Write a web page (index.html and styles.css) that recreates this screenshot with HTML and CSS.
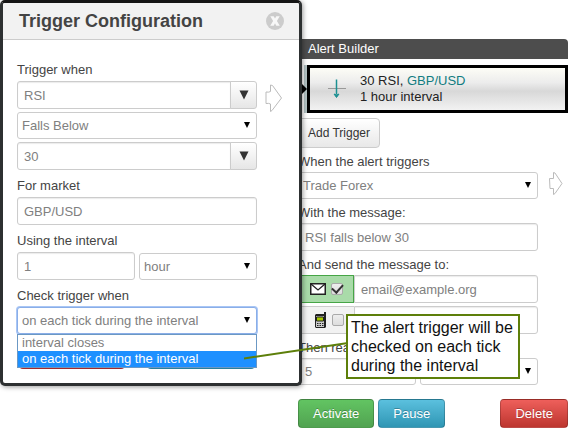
FILE: index.html
```html
<!DOCTYPE html>
<html lang="en">
<head>
<meta charset="utf-8">
<title>Alert Builder</title>
<link rel="stylesheet" href="styles.css">
</head>
<body>
<main class="page">
  <section class="dialog" role="dialog" aria-labelledby="dialog-title">
    <header class="dialog-head">
      <h1 id="dialog-title">Trigger Configuration</h1>
      <button class="close" type="button" aria-label="Close">
        <svg width="18" height="18" viewBox="0 0 18 18"><circle cx="9" cy="9" r="9" fill="#ccc"/><path d="M4.300 4.300h3.400L9 6.600l1.300-2.300h3.400L10.900 9l2.900 4.700h-3.500L9 11.300l-1.300 2.400H4.200L7.100 9z" fill="#f8f8f8"/></svg>
      </button>
    </header>
    <form class="dialog-body">
      <div class="fields">
        <label class="label" for="indicator">Trigger when</label>
        <div class="combo">
          <input class="field" id="indicator" value="RSI">
          <button class="combo-btn" type="button" aria-label="Choose indicator"><svg width="10" height="10" viewBox="0 0 10 10"><path d="M0.500 0.500h9L5 9.500z" fill="#333"/></svg></button>
        </div>
        <div class="select-wrap">
          <select class="field select" aria-label="Condition"><option>Falls Below</option></select>
          <svg class="caret" viewBox="0 0 6 6"><path d="M0 0h6L3 6z"/></svg>
        </div>
        <div class="combo">
          <input class="field" aria-label="Value" value="30">
          <button class="combo-btn" type="button" aria-label="Choose value"><svg width="10" height="10" viewBox="0 0 10 10"><path d="M0.500 0.500h9L5 9.500z" fill="#333"/></svg></button>
        </div>
        <label class="label" for="market">For market</label>
        <input class="field" id="market" value="GBP/USD">
        <label class="label" for="count">Using the interval</label>
        <div class="pair">
          <input class="field" id="count" value="1">
          <div class="select-wrap">
            <select class="field select" aria-label="Interval unit"><option>hour</option></select>
            <svg class="caret" viewBox="0 0 6 6"><path d="M0 0h6L3 6z"/></svg>
          </div>
        </div>
        <label class="label" for="check">Check trigger when</label>
        <div class="select-wrap open">
          <select class="field select" id="check"><option>on each tick during the interval</option></select>
          <svg class="caret" viewBox="0 0 6 6"><path d="M0 0h6L3 6z"/></svg>
          <ul class="menu" role="listbox" aria-label="Check trigger when">
            <li role="option">interval closes</li>
            <li class="active" role="option" aria-selected="true">on each tick during the interval</li>
          </ul>
        </div>
        <div class="actions"><span class="edge red"></span><span class="edge blue"></span></div>
      </div>
      <svg class="next" width="18" height="28" viewBox="0 0 18 28"><path d="M1 8q3 .5 4.500-.5V1l2 .5L16.500 14 7 26.500l-1.500 1V20q-1.500-1-4.500-.5z" fill="#fff" stroke="#bbb"/></svg>
    </form>
  </section>

  <section class="builder">
    <h2 class="builder-head">Alert Builder</h2>
    <div class="trigger">
      <svg class="pointer" width="5" height="10" viewBox="0 0 5 10"><path d="M0 0l5 5-5 5z"/></svg>
      <svg width="18" height="20" viewBox="0 0 18 20"><path d="M0 9.500h18" stroke="#999"/><path d="M8.500 0.500v15" stroke="#1c9092" stroke-width="1.500"/><path d="M6 15l2.500 3.500L11 15l-2.500 1z" fill="#1c9092" stroke="#1c9092"/></svg>
      <p>30 RSI, <a href="#market">GBP/USD</a><br>1 hour interval</p>
    </div>
    <button class="add" type="button">Add Trigger</button>
    <form class="builder-form">
      <div class="fields">
        <label class="label" for="action">When the alert triggers</label>
        <div class="select-wrap">
          <select class="field select" id="action"><option>Trade Forex</option></select>
          <svg class="caret" viewBox="0 0 6 6"><path d="M0 0h6L3 6z"/></svg>
        </div>
        <label class="label" for="message">With the message:</label>
        <input class="field" id="message" value="RSI falls below 30">
        <label class="label" for="email">And send the message to:</label>
        <div class="contact on">
          <span class="tag">
            <svg width="16" height="12" viewBox="0 0 16 12"><rect x=".75" y=".75" width="14.500" height="10.500" fill="#fff" stroke="#222" stroke-width="1.500"/><path d="M1 1l7 6 7-6" fill="none" stroke="#222" stroke-width="1.300"/></svg>
            <input class="tick" type="checkbox" aria-label="Send by email" checked>
          </span>
          <input class="field" id="email" value="email@example.org">
        </div>
        <div class="contact">
          <span class="tag">
            <svg width="12" height="16" viewBox="0 0 12 16"><path d="M9 0h2v15l-1 1H1l-1-1V3l1-1h8z" fill="#222"/><path d="M1 4h8v11H1z" fill="#ccc"/><path d="M1.500 5h7v4h-7z" fill="#a6c800" stroke="#222"/><path d="M2 11.500h7M2 13.500h7" stroke="#222" stroke-dasharray="1.500 1"/></svg>
            <input class="tick" type="checkbox" aria-label="Send by text message">
          </span>
          <input class="field" aria-label="Phone number">
        </div>
        <label class="label" for="delay">Then rea</label>
        <div class="pair">
          <input class="field short" id="delay" value="5">
          <div class="select-wrap">
            <select class="field select" aria-label="Delay unit"><option></option></select>
            <svg class="caret" viewBox="0 0 6 6"><path d="M0 0h6L3 6z"/></svg>
          </div>
        </div>
      </div>
      <svg class="next" width="14" height="23" viewBox="0 0 14 23"><path d="M.5 6.500h4V.5l1.500.500 7 10.500L6 21.500l-1.500 1v-6H1z" fill="#fff" stroke="#bbb"/></svg>
    </form>
    <div class="buttons">
      <button class="btn green" type="button">Activate</button>
      <button class="btn blue" type="button">Pause</button>
      <button class="btn red" type="button">Delete</button>
    </div>
  </section>

  <svg class="connector" width="104" height="18" viewBox="0 0 104 18"><path d="M0 16.500L104 1" stroke="#5d7f0a" stroke-width="2"/></svg>
  <aside class="callout">The alert trigger will be<br>checked on each tick<br>during the interval</aside>
</main>
</body>
</html>
```

FILE: styles.css
```css
* { box-sizing: border-box; }

body {
  margin: 0;
  background: #fff;
  color: #444;
  font: 13px/20px "Liberation Sans", Arial, sans-serif;
}

h1, h2, p, ul { margin: 0; padding: 0; }
button, input, select { font: inherit; margin: 0; }
svg { display: block; flex: none; }

.page {
  position: relative;
  display: grid;
  grid-template-columns: minmax(0, 302fr) minmax(0, 272fr);
  align-items: start;
}

/* Dialog */
.dialog {
  position: relative;
  z-index: 1;
  border: 3px solid #2d3031;
  border-top-color: #151515;
  border-radius: 5px;
  background: #fff;
  box-shadow: 1px 1px 5px rgba(0, 0, 0, 0.4);
}

.dialog-head {
  display: flex;
  align-items: center;
  justify-content: space-between;
  height: 37px;
  padding: 0 15px 0 16px;
  border-bottom: 1px solid #ccc;
  border-radius: 2px 2px 0 0;
  background: #f2f2f2;
}

.dialog-head h1 { font-size: 18px; line-height: 24px; color: #444; }
.close { padding: 0; border: 0; background: none; }

.dialog-body {
  display: flex;
  gap: 8px;
  padding: 14px 16px 14px 14px;
}

.fields { flex: 1; min-width: 0; }
.label { display: block; margin: 6px 0 1px; }

.field {
  display: block;
  width: 100%;
  min-width: 0;
  height: 28px;
  padding: 0 6px;
  border: 1px solid #ccc;
  border-radius: 3px;
  background: #fff;
  color: #808080;
  box-shadow: inset 0 1px 1px rgba(0, 0, 0, 0.08);
}

.select { appearance: none; height: 27px; padding: 0 4px; box-shadow: none; }
.select-wrap { position: relative; min-width: 0; }
.caret { position: absolute; top: 10px; right: 7px; width: 6px; height: 6px; }

.combo { display: flex; }
.combo .field { flex: 1; border-radius: 3px 0 0 3px; }
.combo-btn {
  display: grid;
  place-items: center;
  width: 27px;
  margin-left: -1px;
  padding: 0;
  border: 1px solid #ccc;
  border-radius: 0 3px 3px 0;
  background: linear-gradient(#fff, #e6e6e6);
}
.combo + .select-wrap, .select-wrap + .combo { margin-top: 3px; }

.pair { display: grid; grid-template-columns: 1fr 1fr; gap: 4px; align-items: end; }

.open .select { border-color: #8aaee8; box-shadow: 0 0 0 1px #a9c6f5; outline: 0; }
.menu {
  position: absolute;
  z-index: 1;
  top: 100%;
  left: 0;
  right: 0;
  border: 1px solid #6b98c4;
  background: #fff;
  color: #808080;
  line-height: 16px;
  list-style: none;
}
.menu li { padding: 0 4px; }
.menu .active { background: #1e90ff; color: #fff; }

.actions { display: flex; justify-content: space-between; margin-top: 6px; padding: 0 2px; }
.edge { height: 29px; border-radius: 4px; }
.edge.red { width: 106px; background: #a52a2a; }
.edge.blue { width: 108px; background: #2a7f9c; }

.dialog .next { margin-top: 30px; }

/* Builder */
.builder { margin-left: -4px; padding: 39px 6px 4px 0; }

.builder-head {
  padding-left: 10px;
  border-radius: 0 4px 0 0;
  background: #4d4d4d;
  color: #fff;
  font-size: 13px;
  font-weight: normal;
}

.trigger {
  position: relative;
  display: flex;
  align-items: center;
  gap: 14px;
  height: 48px;
  margin: 6px 0 5px 9px;
  padding-left: 18px;
  border: 3px solid #000;
  background: linear-gradient(#fdfdf6, #ececec 35%, #d8d8d8 55%, #f2f2f2);
  box-shadow: -3px 0 #b5c5c6;
  color: #222;
  line-height: 16px;
}
.trigger a { color: #117c80; text-decoration: none; }
.pointer { position: absolute; left: -8px; top: 16px; }

.add {
  display: block;
  height: 30px;
  padding: 0 9px;
  border: 1px solid #ccc;
  border-radius: 4px;
  background: linear-gradient(#fff, #e8e8e8);
  color: #333;
  font-size: 12px;
}

.builder-form { display: flex; gap: 11px; padding-right: 5px; }
.builder-form .label { margin: 4px 0 0; }
.builder-form .next { margin-top: 24px; }
.builder-form .field:not(.select) { padding: 0 6px; }
.builder-form .short { height: 27px; }

.contact { display: flex; }
.contact + .contact { margin-top: 3px; }
.contact .field { flex: 1; border-radius: 0 3px 3px 0; }
.tag {
  display: flex;
  align-items: center;
  justify-content: flex-end;
  gap: 5px;
  width: 56px;
  padding-right: 10px;
  border: 1px solid #ccc;
  border-right: 0;
  background: #f2f2f2;
}
.on .tag { border: 1px solid #46a546; background: #a9dba9; }

.tick {
  appearance: none;
  display: grid;
  place-items: center;
  width: 12px;
  height: 12px;
  border: 1px solid #aaa;
  border-radius: 2px;
  background: linear-gradient(#eee, #ddd);
}
.tick:checked::after {
  content: "";
  width: 9px;
  height: 5px;
  margin-bottom: 3px;
  border: solid #333;
  border-width: 0 0 2px 2px;
  transform: rotate(-48deg);
}

.buttons { display: flex; gap: 4px; margin-top: 14px; }
.btn {
  height: 29px;
  padding: 0 14px;
  border: 1px solid rgba(0, 0, 0, 0.2);
  border-radius: 4px;
  color: #fff;
  text-shadow: 0 -1px 0 rgba(0, 0, 0, 0.25);
}
.btn.green { background: linear-gradient(#62c462, #51a351); }
.btn.blue { background: linear-gradient(#5bc0de, #2f96b4); }
.btn.red { margin-left: auto; background: linear-gradient(#ee5f5b, #bd362f); }

/* Annotation */
.connector { position: absolute; z-index: 2; left: 244px; top: 342px; }
.callout {
  position: absolute;
  z-index: 2;
  left: 346px;
  top: 314px;
  padding: 2px 5px 2px 3px;
  border: 2px solid #5d7f0a;
  background: #fff;
  color: #111;
  font-size: 16px;
  line-height: 19px;
  white-space: nowrap;
}
```
